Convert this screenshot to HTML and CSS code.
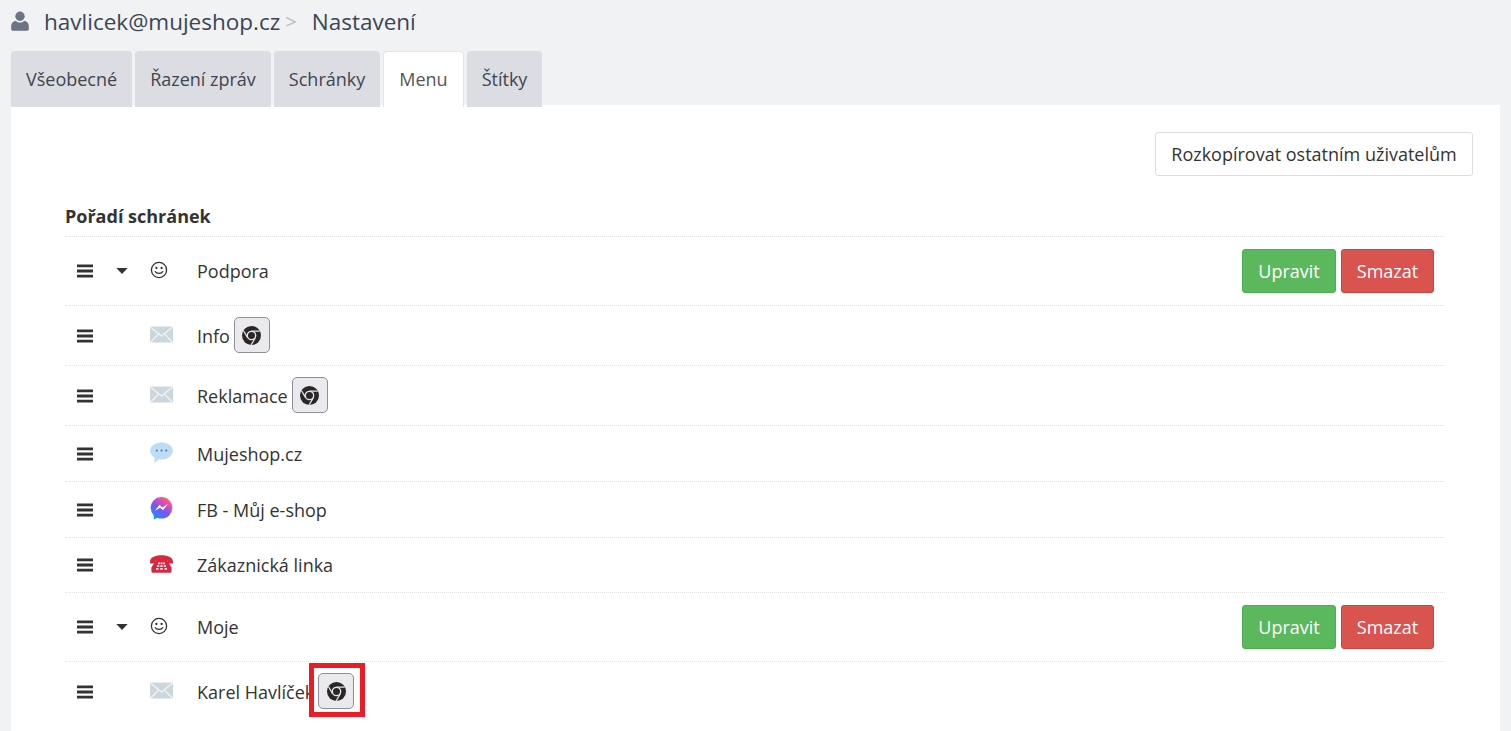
FILE: index.html
```html
<!DOCTYPE html>
<html lang="cs">
<head>
<meta charset="utf-8">
<title>Nastavení</title>
<link rel="stylesheet" href="styles.css">
</head>
<body>
<svg class="defs" width="0" height="0" aria-hidden="true">
  <defs>
    <symbol id="bars" viewBox="0 0 16 14"><path d="M0 0.5h16v2.8H0zM0 5.6h16v2.8H0zM0 10.7h16v2.8H0z" fill="#333"/></symbol>
    <symbol id="caret" viewBox="0 0 12 6"><path d="M0.3 0h11.4L6 6z" fill="#333"/></symbol>
    <symbol id="smile" viewBox="0 0 18 18"><circle cx="9" cy="9" r="7.6" fill="none" stroke="#333" stroke-width="1.3"/><circle cx="6.4" cy="7" r="1.15" fill="#333"/><circle cx="11.6" cy="7" r="1.15" fill="#333"/><path d="M5.2 10.6c1 2.4 6.6 2.4 7.6 0" fill="none" stroke="#333" stroke-width="1.2" stroke-linecap="round"/></symbol>
    <symbol id="mail" viewBox="0 0 23 17"><rect x="0" y="0.5" width="23" height="16" rx="1.2" fill="#cbd6dd"/><path d="M0.6 1.2 11.5 10 22.4 1.2M0.8 16 8.6 7.8M22.2 16 14.4 7.8" fill="none" stroke="#f2f5f7" stroke-width="1.2"/></symbol>
    <symbol id="chrome" viewBox="0 0 20 20"><circle cx="10" cy="10" r="10" fill="#2b2727"/><circle cx="10" cy="10" r="4.4" fill="#2b2727" stroke="#e8e8ee" stroke-width="1.4"/><path d="M10 5.4h8.6M5.9 12.2 1.6 5M14 12.4 9.7 19.8" stroke="#e8e8ee" stroke-width="1.3" fill="none"/></symbol>
    <linearGradient id="msgr" x1="0.2" y1="1" x2="0.85" y2="0.05"><stop offset="0" stop-color="#1f8cff"/><stop offset="0.45" stop-color="#7a55f5"/><stop offset="0.8" stop-color="#f0509a"/><stop offset="1" stop-color="#fb6c70"/></linearGradient>
    <symbol id="bubble" viewBox="0 0 23 21"><ellipse cx="11.5" cy="8.8" rx="11.3" ry="8.6" fill="#bfdcf5"/><path d="M5 14 4 21 11 16z" fill="#bfdcf5"/><circle cx="6.8" cy="8.6" r="1.1" fill="#4f7fae"/><circle cx="11.5" cy="8.6" r="1.1" fill="#4f7fae"/><circle cx="16.2" cy="8.6" r="1.1" fill="#4f7fae"/></symbol>
    <symbol id="messenger" viewBox="0 0 23 23"><circle cx="11.5" cy="10.8" r="10.8" fill="url(#msgr)"/><path d="M3.8 17v5.6l5-2.6z" fill="#1f8cff"/><path d="M4.6 14 9.6 7.8 12.4 10.4 18.2 6.8 13 13.2 10.2 10.8z" fill="#fff"/></symbol>
    <symbol id="phone" viewBox="0 0 23 18"><path d="M0 7C0 2.4 5 0.3 11.5 0.3S23 2.4 23 7V8.4H17.4V5.6C15.6 4.8 7.4 4.8 5.6 5.6V8.4H0z" fill="#d8283f"/><path d="M6.4 4.4h10.2L21.6 12.6V16.2A1.6 1.6 0 0 1 20 17.8H3A1.6 1.6 0 0 1 1.4 16.2V12.6z" fill="#d8283f"/><path d="M8 7.6h1.9v1.7H8zM10.6 7.6h1.9v1.7h-1.9zM13.1 7.6H15v1.7h-1.9zM7 10.3h2.2V12H7zM10.4 10.3h2.2V12h-2.2zM13.8 10.3H16V12h-2.2zM6 13h2.5v1.8H6zM10.3 13h2.4v1.8h-2.4zM14.5 13H17v1.8h-2.5z" fill="#fde9eb"/></symbol>
  </defs>
</svg>

<header class="crumbs">
  <svg class="user" viewBox="0 0 18 20" aria-hidden="true"><circle cx="9" cy="5.2" r="4.7" fill="#6b7480"/><path d="M0.2 18V15c0-3.4 2.6-5 4.8-5 1.2 1 2.5 1.5 4 1.5s2.8-.5 4-1.5c2.2 0 4.8 1.6 4.8 5v3c0 1-.8 1.8-1.8 1.8H2c-1 0-1.8-.8-1.8-1.8z" fill="#6b7480"/></svg>
  <span class="crumb-user">havlicek@mujeshop.cz</span>
  <span class="crumb-sep">&gt;</span>
  <span class="crumb-page">Nastavení</span>
</header>

<nav class="tabs">
  <a class="tab">Všeobecné</a>
  <a class="tab">Řazení zpráv</a>
  <a class="tab">Schránky</a>
  <a class="tab tab-active">Menu</a>
  <a class="tab">Štítky</a>
</nav>

<main class="panel">
  <div class="toolbar"><button class="btn btn-default">Rozkopírovat ostatním uživatelům</button></div>
  <h2 class="heading">Pořadí schránek</h2>
  <ul class="list">
    <li class="row row-group">
      <svg class="bars"><use href="#bars"/></svg>
      <svg class="caret"><use href="#caret"/></svg>
      <svg class="ico ico-smile"><use href="#smile"/></svg>
      <span class="name">Podpora</span>
      <span class="actions"><button class="btn btn-green">Upravit</button><button class="btn btn-red">Smazat</button></span>
    </li>
    <li class="row row-badge">
      <svg class="bars"><use href="#bars"/></svg>
      <span class="caret"></span>
      <svg class="ico ico-mail"><use href="#mail"/></svg>
      <span class="name">Info</span>
      <span class="badge"><svg class="chrome"><use href="#chrome"/></svg></span>
    </li>
    <li class="row row-badge">
      <svg class="bars"><use href="#bars"/></svg>
      <span class="caret"></span>
      <svg class="ico ico-mail"><use href="#mail"/></svg>
      <span class="name">Reklamace</span>
      <span class="badge"><svg class="chrome"><use href="#chrome"/></svg></span>
    </li>
    <li class="row">
      <svg class="bars"><use href="#bars"/></svg>
      <span class="caret"></span>
      <svg class="ico ico-bubble"><use href="#bubble"/></svg>
      <span class="name">Mujeshop.cz</span>
    </li>
    <li class="row">
      <svg class="bars"><use href="#bars"/></svg>
      <span class="caret"></span>
      <svg class="ico ico-msgr"><use href="#messenger"/></svg>
      <span class="name">FB - Můj e-shop</span>
    </li>
    <li class="row row-short">
      <svg class="bars"><use href="#bars"/></svg>
      <span class="caret"></span>
      <svg class="ico ico-phone"><use href="#phone"/></svg>
      <span class="name">Zákaznická linka</span>
    </li>
    <li class="row row-group">
      <svg class="bars"><use href="#bars"/></svg>
      <svg class="caret"><use href="#caret"/></svg>
      <svg class="ico ico-smile"><use href="#smile"/></svg>
      <span class="name">Moje</span>
      <span class="actions"><button class="btn btn-green">Upravit</button><button class="btn btn-red">Smazat</button></span>
    </li>
    <li class="row row-badge">
      <svg class="bars"><use href="#bars"/></svg>
      <span class="caret"></span>
      <svg class="ico ico-mail"><use href="#mail"/></svg>
      <span class="name">Karel Havlíček</span>
      <span class="badge badge-marked"><svg class="chrome"><use href="#chrome"/></svg><span class="marker"></span></span>
    </li>
  </ul>
</main>
</body>
</html>
```

FILE: styles.css
```css
* { box-sizing: border-box; }
html, body { height: 100%; overflow: hidden; }
body {
  margin: 0;
  background: #f1f2f4;
  color: #333;
  font-family: "Open Sans", "Liberation Sans", sans-serif;
  font-size: 18px;
}
.defs { position: absolute; }

.crumbs {
  height: 51px;
  padding: 0 0 9px 11px;
  display: flex;
  align-items: center;
  color: #3b4654;
  font-size: 22.5px;
}
.user { width: 18px; height: 20px; margin-right: 15px; }
.crumb-sep { color: #bbb; margin: 0 15px 0 5px; font-size: 20px; }

.tabs { display: flex; gap: 3px; padding-left: 11px; height: 54px; position: relative; z-index: 1; }
.tab {
  height: 56px;
  padding: 0 15px;
  display: flex;
  align-items: center;
  background: #dcdde2;
  border-radius: 4px 4px 0 0;
  color: #3f4650;
  font-size: 18px;
}
.tab-active { background: #fff; color: #555; border: 1px solid #e4e5e9; border-bottom: 0; padding-bottom: 2px; }

.panel { margin: 0 11px; background: #fff; height: 640px; padding: 27px 27px 0 54px; }
.toolbar { display: flex; justify-content: flex-end; height: 44px; }
.btn {
  height: 44px;
  padding: 0;
  border: 1px solid #ddd;
  border-radius: 3px;
  background: #fff;
  color: #333;
  font: 18px "Open Sans", "Liberation Sans", sans-serif;
}
.btn-default { width: 318px; }
.btn-green { width: 94px; background: #5cb85c; border-color: #4cae4c; color: #fff; }
.btn-red { width: 93px; background: #d9534f; border-color: #d43f3a; color: #fff; }

.heading { margin: 0; height: 60px; padding-top: 28px; font-size: 18px; line-height: 24px; font-weight: 700; color: #333; }
.list { list-style: none; margin: 0; padding: 0; width: 1380px; }
.row {
  height: 56px;
  display: flex;
  align-items: center;
  border-top: 1px dotted #e2e2e2;
  padding: 0 11px 0 12px;
  position: relative;
}
.row-group { height: 69px; }
.row-badge { height: 60px; }
.row-short { height: 55px; }
.bars { width: 16px; height: 14px; flex: none; }
.caret { width: 12px; height: 6px; margin-left: 23px; flex: none; }
.ico { flex: none; margin-left: 22px; margin-right: 25px; width: 23px; }
.ico-smile { width: 18px; height: 18px; margin-right: 30px; margin-top: -2px; }
.ico-mail { height: 17px; margin-top: -2px; }
.ico-bubble { height: 21px; margin-top: -3px; }
.ico-msgr { height: 23px; margin-top: -2px; }
.ico-phone { height: 18px; margin-top: -3px; }
.name { line-height: 24px; margin-left: -1px; }
.actions { margin-left: auto; display: flex; gap: 5px; }
.badge {
  width: 36px;
  height: 36px;
  margin-left: 4px;
  margin-top: -1px;
  display: flex;
  align-items: center;
  justify-content: center;
  background: #e9e9ee;
  border: 1px solid #8f8d9b;
  border-radius: 5px;
  position: relative;
}
.chrome { width: 19px; height: 19px; }
.marker {
  position: absolute;
  left: -10px;
  top: -11px;
  width: 56px;
  height: 54px;
  border: 5px solid #ed1c24;
}
```
